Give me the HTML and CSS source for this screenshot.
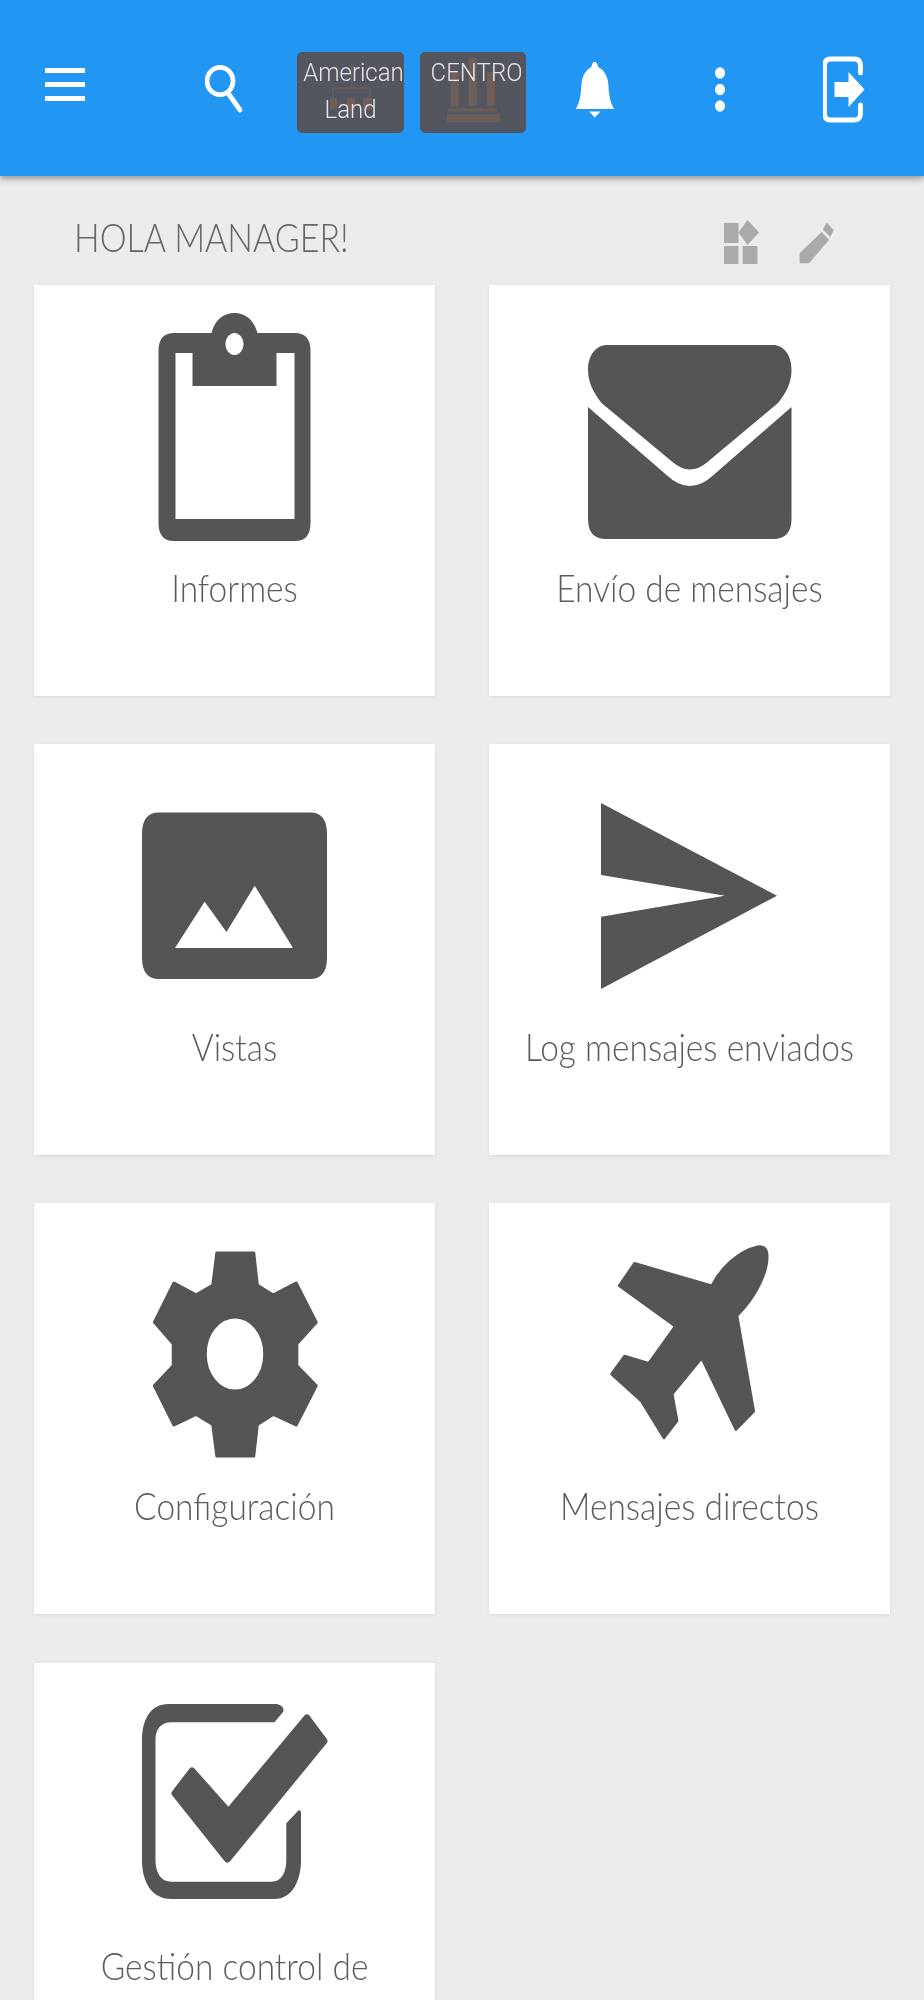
FILE: index.html
```html
<!DOCTYPE html>
<html lang="es">
<head>
<meta charset="utf-8">
<title>Inicio</title>
<link rel="stylesheet" href="styles.css">
</head>
<body>
<div class="app">
  <header class="bar">
    <svg class="tb tb-menu" width="40" height="176" viewBox="45 0 40 176"><path d="M45 68h40v5H45zM45 82h40v5H45zM45 96h40v5H45z"/></svg>
    <svg class="tb tb-search" width="39" height="176" viewBox="205 0 39 176"><ellipse cx="220" cy="81" rx="13" ry="13.7" class="ln"/><path d="M228 93l12 17" class="ln thick"/></svg>
    <div class="badge badge-a">
      <svg class="badge-art" width="107" height="81" viewBox="0 0 107 81"><path d="M54.700 13v23M36 46V36h37v10" class="art-ln"/><path d="M33 46h7v12h-7zM50 46h8v12h-8zM66 46h9v12h-9z" class="art"/></svg>
      <span class="badge-text">American<br>Land</span>
    </div>
    <div class="badge badge-b">
      <svg class="badge-art" width="106" height="81" viewBox="0 0 106 81"><path d="M30.700 20H39v34h-8.300zM48.700 6h8v48h-8zM66.700 20H75v34h-8.300zM28 56.500h49v3H28zM27 62h53v8H27z" class="art"/></svg>
      <span class="badge-text">CENTRO</span>
    </div>
    <svg class="tb tb-bell" width="39" height="176" viewBox="576 0 39 176"><path d="M594.700 62c2 0 3 2 3.400 5 6 3 9.800 9 10.300 18 .6 10 1.600 17 5.600 24H575.800c4-7 5-14 5.600-24 .5-9 4.300-15 10-18 .5-3 1.300-5 3.300-5zM589 111.500h11.500l-5.700 6z"/></svg>
    <svg class="tb tb-dots" width="11" height="176" viewBox="715.500 0 11 176"><ellipse cx="720.500" cy="73" rx="5" ry="5.800"/><ellipse cx="720.500" cy="89.500" rx="5" ry="5.800"/><ellipse cx="720.500" cy="106" rx="5" ry="5.800"/></svg>
    <svg class="tb tb-exit" width="43" height="176" viewBox="824.500 0 43 176"><path d="M862 73V66q0-7-6-7h-24q-6 0-6 7v47q0 7 6 7h24q6 0 6-7v-8" class="ln thick"/><path d="M836 82h14V72l16 17.500-16 17.500V97h-14z"/></svg>
  </header>

  <div class="greet">
    <h1 class="greet-title">HOLA MANAGER!</h1>
    <svg class="greet-icon" width="35" height="109" viewBox="725 176 35 109"><path d="M725 223h14.500v20H725zM725 246h14.500v18H725zM743.700 246h14.700v18h-14.700zM748.500 220l11.500 12.500-11.500 12.500-9-12.500z"/></svg>
    <svg class="greet-icon greet-pencil" width="35" height="109" viewBox="799 176 35 109"><path d="M826.700 222.500l7.100 7.500-3.500 7-7.500-7.500zM821.600 232l7.500 7.800-20.100 23.500h-9.400v-10z"/></svg>
  </div>

  <main class="grid">
    <a class="card">
      <svg class="ico ico-left" width="240" height="240" viewBox="0 0 240 240"><path fill-rule="evenodd" d="M44.500 46Q44.500 28 60 28H97.500C101 14 110 8 120.500 8C131 8 139.500 14 143.500 28H181Q196.500 28 196.500 46V218Q196.500 236 181 236H60Q44.500 236 44.500 218ZM61.500 48V214H180.500V48H162.500V81H78.500V48ZM120.500 28c-5 0-9 5-9 11s4 11 9 11 9-5 9-11-4-11-9-11z"/></svg>
      <span class="lbl">Informes</span>
    </a>
    <a class="card">
      <svg class="ico" width="240" height="240" viewBox="0 0 240 240"><path d="M37.500 40H202.500C214 40 221.500 50 221.500 65C221.500 78 216 88 208 98L137.500 157Q120 172 102.500 157L31.500 98C24 88 18 78 18 65C18 50 26 40 37.500 40Z"/><path d="M18 102L96.500 170Q120 192 143.500 170L221.500 102V214Q221.500 234 203 234H36Q18 234 18 214Z"/></svg>
      <span class="lbl">Envío de mensajes</span>
    </a>
    <a class="card">
      <svg class="ico ico-left" width="240" height="240" viewBox="0 0 240 240"><path fill-rule="evenodd" d="M45 48.500H196Q213 48.500 213 70V193.500Q213 215 196 215H45Q28 215 28 193.500V70Q28 48.500 45 48.500ZM61 184H179L140.700 121.700L112.500 168L90.600 137.700Z"/></svg>
      <span class="lbl">Vistas</span>
    </a>
    <a class="card">
      <svg class="ico" width="240" height="240" viewBox="0 0 240 240"><path d="M31 39L207 131.700L31 225V152.700L155 131.700L31 111Z"/></svg>
      <span class="lbl">Log mensajes enviados</span>
    </a>
    <a class="card">
      <svg class="ico" width="240" height="240" viewBox="0 0 240 240"><path class="soft" fill-rule="evenodd" d="M101.600 29.700H139L142.600 62L158.300 71.700L181.400 59.700L201.500 99.300L182.100 121V142.700L201.500 162.700L181.400 202.300L158.300 191.700L142.600 201.700L139 233.300H101.600L97.500 201.700L81.100 191.700L58.700 202.300L39.100 162.700L58 142.700V121L39.100 99.300L58.700 59.700L81.100 71.700L97.500 62ZM120 94.300c-16.300 0-29.500 16.400-29.500 36.700s13.200 36.700 29.500 36.700 29.500-16.400 29.500-36.700-13.200-36.700-29.500-36.700z"/></svg>
      <span class="lbl">Configuración</span>
    </a>
    <a class="card">
      <svg class="ico" width="240" height="240" viewBox="0 0 240 240"><path class="soft" d="M187.700 23.700C195 23 197.300 27 197.300 33.700C197.300 48 188 72 167.100 92.700L183.800 188.300L165.900 206.700L131.700 135.300L102.300 171L107.200 197.700L94 215L70.900 177.700L41.400 151L54.500 133L78.700 140.300L105.200 103.300L49.100 62.700L64.500 40.300L141.800 62.700C150 46 168 28 187.700 23.700Z"/></svg>
      <span class="lbl">Mensajes directos</span>
    </a>
    <a class="card">
      <svg class="ico" width="240" height="240" viewBox="0 0 240 240"><path d="M159.500 21H53.400C36 21 27 36 27 57V177C27 198 36 216 56.400 216H159.500C177 216 186 198 186 177V130C186 126 183 127 182 129L171.300 140.300V177C171.300 190 166 198.700 156.600 198.700H56.400C46 198.700 40.500 190 40.500 177V57C40.500 46 46 39.300 56.400 39.300H159.500L168 29C170 25 166 21 159.500 21Z"/><path class="tick" d="M191.900 35L209 58L112.400 176L60 110.300L77 88L113.500 129Z"/></svg>
      <span class="lbl">Gestión control de</span>
    </a>
  </main>
</div>
</body>
</html>
```
FILE: styles.css
```css
html, body {
  margin: 0;
  padding: 0;
  background: #ebebeb;
}

.app {
  width: 924px;
  height: 2000px;
  overflow: hidden;
  background: #ebebeb;
  filter: blur(0.75px);
  font-family: Lato, "Open Sans", sans-serif;
}

.bar {
  height: 176px;
  background: #2196f3;
  box-shadow: 0 3px 6px rgba(0, 0, 0, 0.35);
  display: flex;
  align-items: flex-start;
  position: relative;
}

.tb { display: block; flex: none; fill: #fff; }
.tb-menu { margin-left: 45px; }
.tb-search { margin-left: 120px; }
.tb-bell { margin-left: 50px; }
.tb-dots { margin-left: 100px; }
.tb-exit { margin-left: 97px; }

.ln { fill: none; stroke: #fff; stroke-width: 4.8; }
.thick { stroke-width: 4.8; stroke-linecap: round; }

.badge {
  position: relative;
  flex: none;
  height: 81px;
  margin-top: 52px;
  background: #54565f;
  border-radius: 5px;
  padding-top: 2px;
  box-sizing: border-box;
  text-align: center;
}
.badge-a { width: 107px; margin-left: 53px; }
.badge-b { width: 106px; margin-left: 16px; }

.badge-art { position: absolute; left: 0; top: 0; }
.art { fill: #6d5f58; }
.art-ln { fill: none; stroke: #6d5f58; stroke-width: 1.5; }

.badge-text {
  position: relative;
  display: block;
  width: 107px;
  font-family: Roboto, sans-serif;
  font-size: 24px;
  font-weight: 300;
  line-height: 34px;
  color: #e4e5e8;
  white-space: nowrap;
  transform: scaleY(1.08);
  transform-origin: 0 0;
  text-indent: 6px;
}

.greet {
  height: 109px;
  display: flex;
  align-items: flex-start;
  padding-left: 74px;
}
.greet-title {
  margin: 41px 0 0;
  font-size: 34px;
  line-height: 40px;
  font-weight: 300;
  color: #666;
  white-space: nowrap;
  transform: scaleY(1.16);
  transform-origin: 0 50%;
}
.greet-icon { display: block; flex: none; fill: #aaa; margin-left: auto; }
.greet-pencil { margin-left: 40px; margin-right: 90px; }

.grid {
  display: grid;
  grid-template-columns: 401px 401px;
  grid-auto-rows: 411px;
  column-gap: 54px;
  row-gap: 48.2px;
  padding: 0 34px;
}

.card {
  display: block;
  background: #fff;
  box-shadow: 0 1px 3px rgba(0, 0, 0, 0.08);
  padding-top: 20px;
  box-sizing: border-box;
  text-align: center;
}

.ico { display: block; margin: 0 auto; fill: #555; }
.ico-left { position: relative; left: -1px; }
.soft { stroke: #555; stroke-width: 2.5; stroke-linejoin: round; }
.tick { stroke: #555; stroke-width: 7; stroke-linejoin: round; }

.lbl {
  display: block;
  margin-top: 20px;
  font-size: 33.5px;
  line-height: 44px;
  font-weight: 300;
  color: #5c5c5c;
  white-space: nowrap;
  transform: scaleY(1.12);
}
```
